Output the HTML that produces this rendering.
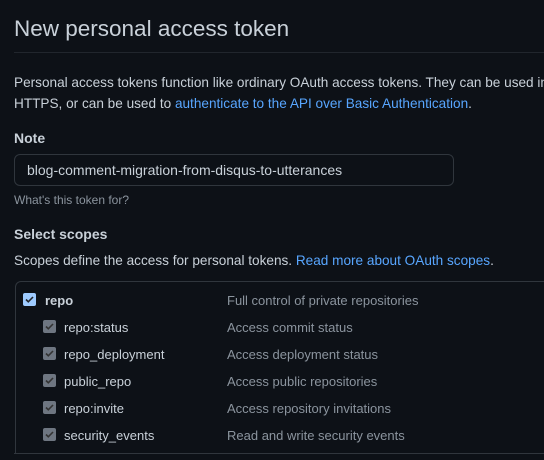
<!DOCTYPE html><html><head><style>
body{margin:0;background:#0d1117;color:#c9d1d9;font-family:"Liberation Sans",sans-serif;width:544px;height:460px;overflow:hidden;position:relative}
div{position:absolute;white-space:nowrap}
a{color:#58a6ff;text-decoration:none}
.cb{width:13px;height:13px;border-radius:2px;background:#6e7681}
.cb svg{position:absolute;left:1px;top:1px}
.d{left:227px;color:#8b949e;font-size:13px}
.l{font-size:13px;color:#c9d1d9}
</style></head><body>
<div style="left:14px;top:16px;font-size:22.5px;color:#c9d1d9">New personal access token</div>
<div style="left:14px;top:52px;width:540px;height:1px;background:#21262d"></div>
<div style="left:14px;top:72px;font-size:13.6px;line-height:21px">Personal access tokens function like ordinary OAuth access tokens. They can be used in<br>HTTPS, or can be used to <a>authenticate to the API over Basic Authentication</a>.</div>
<div style="left:14px;top:130px;font-size:14px;font-weight:bold">Note</div>
<div style="left:14px;top:154px;width:438px;height:30px;border:1px solid #30363d;border-radius:6px;background:#0d1117"></div>
<div style="left:27px;top:162px;font-size:14px">blog-comment-migration-from-disqus-to-utterances</div>
<div style="left:14px;top:193px;font-size:12px;color:#8b949e">What's this token for?</div>
<div style="left:14px;top:226px;font-size:14px;font-weight:bold">Select scopes</div>
<div style="left:14px;top:253px;font-size:13.6px">Scopes define the access for personal tokens. <a>Read more about OAuth scopes</a>.</div>
<div style="left:15px;top:281px;width:540px;height:172px;border:1px solid #30363d;border-bottom:none;border-radius:6px 0 0 0"></div>
<div style="left:14px;top:453px;width:540px;height:1px;background:#30363d"></div>
<div class="cb" style="left:23px;top:293px;background:#9ecbff"><svg width="11" height="11" viewBox="0 0 11 11"><path d="M2 5.5l2.3 2.3L9 3" stroke="#1f2328" stroke-width="1.6" fill="none"/></svg></div>
<div class="l" style="left:45px;top:293px;font-weight:bold">repo</div>
<div class="d" style="top:293px">Full control of private repositories</div>
<div class="cb" style="left:43px;top:320px"><svg width="11" height="11" viewBox="0 0 11 11"><path d="M2 5.5l2.3 2.3L9 3" stroke="#333" stroke-width="1.6" fill="none"/></svg></div>
<div class="l" style="left:64px;top:320px">repo:status</div><div class="d" style="top:320px">Access commit status</div>
<div class="cb" style="left:43px;top:347px"><svg width="11" height="11" viewBox="0 0 11 11"><path d="M2 5.5l2.3 2.3L9 3" stroke="#333" stroke-width="1.6" fill="none"/></svg></div>
<div class="l" style="left:64px;top:347px">repo_deployment</div><div class="d" style="top:347px">Access deployment status</div>
<div class="cb" style="left:43px;top:374px"><svg width="11" height="11" viewBox="0 0 11 11"><path d="M2 5.5l2.3 2.3L9 3" stroke="#333" stroke-width="1.6" fill="none"/></svg></div>
<div class="l" style="left:64px;top:374px">public_repo</div><div class="d" style="top:374px">Access public repositories</div>
<div class="cb" style="left:43px;top:401px"><svg width="11" height="11" viewBox="0 0 11 11"><path d="M2 5.5l2.3 2.3L9 3" stroke="#333" stroke-width="1.6" fill="none"/></svg></div>
<div class="l" style="left:64px;top:401px">repo:invite</div><div class="d" style="top:401px">Access repository invitations</div>
<div class="cb" style="left:43px;top:428px"><svg width="11" height="11" viewBox="0 0 11 11"><path d="M2 5.5l2.3 2.3L9 3" stroke="#333" stroke-width="1.6" fill="none"/></svg></div>
<div class="l" style="left:64px;top:428px">security_events</div><div class="d" style="top:428px">Read and write security events</div>
</body></html>
